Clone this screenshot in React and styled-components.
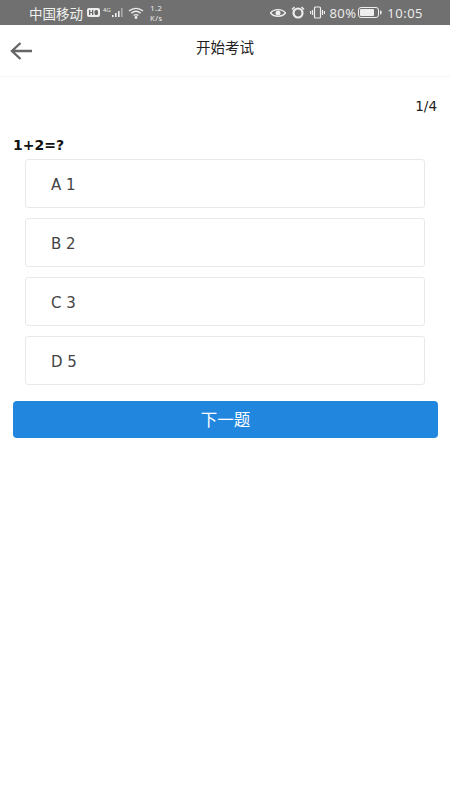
import React from "react";
import styled, { createGlobalStyle } from "styled-components";

const Global = createGlobalStyle`
  html, body { margin: 0; padding: 0; background: #fff; }
  body { font-family: "DejaVu Sans", "Noto Sans CJK SC", sans-serif; }
`;
const Page = styled.div`
  width: 450px; height: 800px; overflow: hidden; background: #fff; display: flex; flex-direction: column;
`;
const StatusBar = styled.div`
  height: 25px; flex: none; background: #707070; color: #f0f0f0; display: flex; align-items: center;
  justify-content: space-between; padding: 0 27px 0 29px; font-size: 13px;
`;
const StatusGroup = styled.div`
  display: flex; align-items: center; gap: ${p => p.$gap || 4}px;
`;
const Carrier = styled.span`
  font-family: "Noto Sans CJK SC", sans-serif; font-size: 13.5px;
`;
const Speed = styled.div`
  display: flex; flex-direction: column; align-items: center; margin-left: 2px;
  font-family: "Noto Sans", sans-serif; letter-spacing: .5px;
`;
const SpeedLine = styled.span`
  font-size: 7.5px; line-height: 10px; display: block;
`;
const StatusText = styled.span`
  font-size: 13px; font-family: "Open Sans", sans-serif; letter-spacing: ${p => p.$spacing || 0}px;
`;
const Header = styled.header`
  height: 52px; box-sizing: border-box; flex: none; position: relative; display: flex; align-items: center;
  justify-content: center; border-bottom: 1px solid #f4f4f4; padding-bottom: 7px;
`;
const Back = styled.svg`
  position: absolute; left: 10px; top: 16px; width: 23px; height: 20px;
`;
const Title = styled.h1`
  margin: 0; font-size: 14.5px; font-weight: 400; color: #222;
  font-family: "Noto Sans CJK SC", sans-serif; line-height: 20px;
`;
const Content = styled.main`
  display: flex; flex-direction: column; padding: 0 13px;
`;
const Progress = styled.div`
  text-align: right; font-size: 13.5px; color: #222; margin-top: 21px; line-height: 16px;
`;
const Question = styled.div`
  font-size: 14px; font-weight: 700; color: #111; margin-top: 22px; line-height: 18px; height: 18px;
`;
const Options = styled.div`
  display: flex; flex-direction: column; gap: 10px; margin: 5px 12px 0;
`;
const Option = styled.div`
  height: 49px; box-sizing: border-box; border: 1px solid #e9e9e9; border-radius: 3px; display: flex;
  align-items: center; padding: 3px 0 0 25px; font-size: 15px; color: #444; background: #fff;
`;
const Next = styled.button`
  margin-top: 16px; height: 37px; border: 0; border-radius: 4px; background: #2186de; color: #fff;
  font-size: 16.5px; font-family: "Noto Sans CJK SC", sans-serif; padding: 0 0 1px; width: 425px;
`;

export default function App() {
  return (
    <Page>
      <Global />
      <StatusBar>
        <StatusGroup>
          <Carrier>中国移动</Carrier>
          <svg width="13" height="9" viewBox="0 0 13 9"><rect width="13" height="9" rx="2" fill="#eee" /><rect x="2" y="2" width="1.3" height="5" fill="#666" /><rect x="5" y="2" width="1.3" height="5" fill="#666" /><rect x="2" y="4" width="4" height="1" fill="#666" /><rect x="7.5" y="2" width="3.5" height="5" rx="1.5" fill="#666" /></svg>
          <svg width="22" height="13" viewBox="0 0 22 13" style={{ marginLeft: -1 }}><text x="0" y="5.5" fontSize="5.5" fill="#eee">4G</text><rect x="9" y="9" width="1.6" height="2" fill="#eee" /><rect x="12" y="7" width="1.6" height="4" fill="#eee" /><rect x="15" y="5" width="1.6" height="6" fill="#eee" /><rect x="18" y="2" width="1.6" height="9" fill="#aaa" /></svg>
          <svg width="16" height="12" viewBox="0 0 16 12" fill="none" stroke="#eee" strokeWidth="1.3" style={{ marginLeft: -1 }}><path d="M1 4c4-3.6 10-3.6 14 0M3.3 6.3c2.8-2.4 6.600-2.400 9.400 0M5.600 8.500c1.400-1.100 3.400-1.100 4.800 0" /><circle cx="8" cy="10.500" r=".8" fill="#eee" /></svg>
          <Speed><SpeedLine>1.2</SpeedLine><SpeedLine>K/s</SpeedLine></Speed>
        </StatusGroup>
        <StatusGroup $gap={5}>
          <svg width="16" height="10" viewBox="0 0 16 10"><path d="M.5 5C4 .6 12 .6 15.500 5 12 9.400 4 9.400.5 5Z" fill="none" stroke="#eee" strokeWidth="1.300" /><circle cx="8" cy="5" r="2.500" fill="#eee" /></svg>
          <svg width="14" height="13" viewBox="0 0 14 13" fill="none" stroke="#eee"><circle cx="7" cy="7" r="4.500" strokeWidth="2.200" /><path d="M1 3.500 3.500 1M13 3.500 10.500 1" strokeWidth="1.500" /></svg>
          <svg width="15" height="13" viewBox="0 0 15 13" fill="none" stroke="#eee" strokeWidth="1.200"><rect x="4.500" y="1" width="6" height="11" rx="1" /><path d="M2.500 4v5M.5 5v3M12.500 4v5M14.500 5v3" /></svg>
          <StatusText $spacing={0.4}>80%</StatusText>
          <svg width="24" height="11" viewBox="0 0 24 11" style={{ marginLeft: -3 }}><rect x=".5" y=".5" width="20" height="10" rx="2.500" fill="none" stroke="#eee" /><rect x="2" y="2" width="14" height="7" rx="1" fill="#eee" /><rect x="22" y="3.500" width="1.500" height="4" rx=".7" fill="#eee" /></svg>
          <StatusText $spacing={0.5}>10:05</StatusText>
        </StatusGroup>
      </StatusBar>
      <Header>
        <Back viewBox="0 0 23 20" fill="none" stroke="#666" strokeWidth="2.400">
          <path d="M22 10H2M10.500 2 2 10l8.500 8" />
        </Back>
        <Title>开始考试</Title>
      </Header>
      <Content>
        <Progress>1/4</Progress>
        <Question>1+2=?</Question>
        <Options>
          <Option>A 1</Option>
          <Option>B 2</Option>
          <Option>C 3</Option>
          <Option>D 5</Option>
        </Options>
        <Next>下一题</Next>
      </Content>
    </Page>
  );
}
